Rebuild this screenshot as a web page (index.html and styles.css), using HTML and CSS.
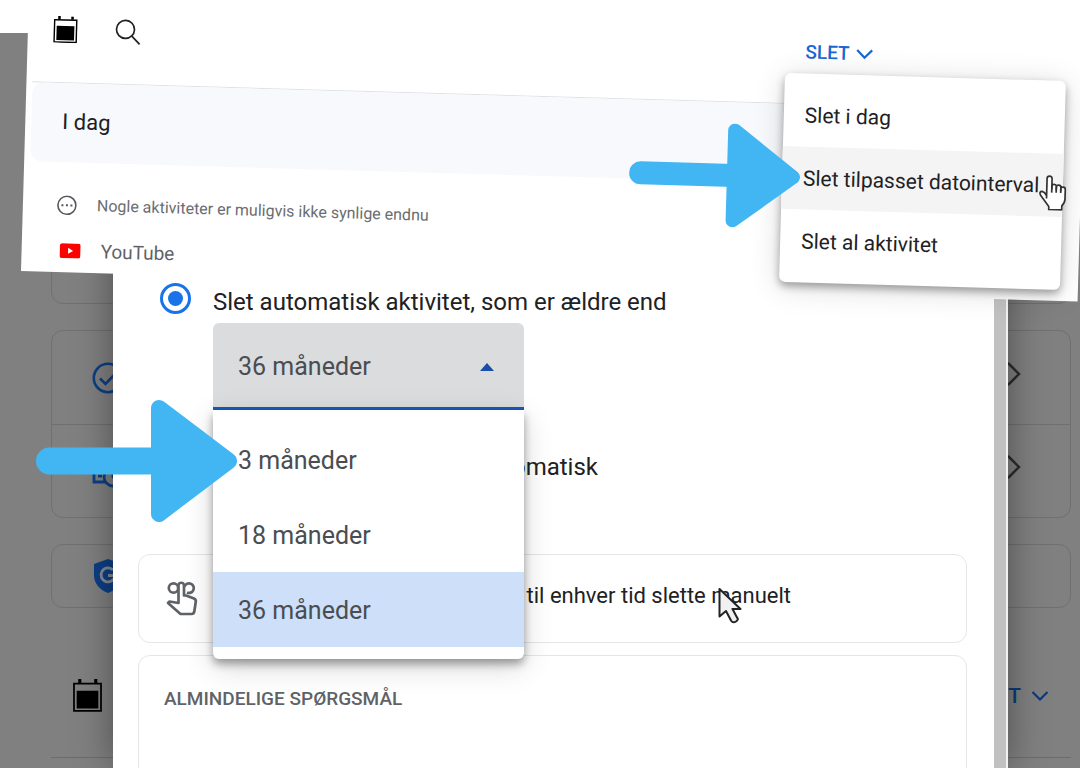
FILE: index.html
```html
<!DOCTYPE html>
<html lang="da">
<head>
<meta charset="utf-8">
<title>Slet aktivitet</title>
<link rel="stylesheet" href="styles.css">
</head>
<body>
<svg class="defs" aria-hidden="true">
  <symbol id="arrow" viewBox="0 0 201 122">
    <path d="M13.500 61H123" stroke="#41b6f3" stroke-width="27" stroke-linecap="round"/>
    <path d="M123 8 193 61 123 114Z" fill="#41b6f3" stroke="#41b6f3" stroke-width="16" stroke-linejoin="round"/>
  </symbol>
  <symbol id="calendar" viewBox="0 0 28 32">
    <path d="M.9 4.500H27.100V30.900H.9Z" fill="none" stroke="currentColor" stroke-width="1.700"/>
    <path d="M3.500 11.500H24.500V28.500H3.500ZM5 0H8V4H5ZM20.500 0H23.500V4H20.500Z"/>
  </symbol>
  <symbol id="down" viewBox="0 0 18 12">
    <path d="M1.500 2 9 9.500 16.500 2" fill="none" stroke="currentColor" stroke-width="2.200"/>
  </symbol>
  <symbol id="next" viewBox="0 0 16 26">
    <path d="M2 2 13 13 2 24" fill="none" stroke="currentColor" stroke-width="2.500"/>
  </symbol>
</svg>
<div class="stage">
  <main class="page">
    <section class="box box-first"></section>
    <section class="box">
      <div class="row">
        <svg class="icon32" viewBox="0 0 32 32" fill="none" stroke="#0c3f86" stroke-width="2.600"><circle cx="16" cy="16" r="14.200"/><path d="M8 16.500 13.500 22 24 11"/></svg>
        <svg class="next"><use href="#next"/></svg>
      </div>
      <div class="row">
        <svg class="icon32" viewBox="0 0 32 32" fill="none" stroke="#0c3f86" stroke-width="2.800"><path d="M13 27H2V9H24"/><circle cx="21" cy="22" r="9"/><path d="M6 21H10M21 16V22L24 25"/></svg>
        <svg class="next"><use href="#next"/></svg>
      </div>
    </section>
    <section class="box">
      <div class="row row-short">
        <svg class="icon32" viewBox="0 0 32 36"><path d="M16 1 30 6V17C30 26 24 32 16 35C8 32 2 26 2 17V6Z" fill="#0d3f86"/><path d="M21 12A7 7 0 1 0 23 17.500H16" fill="none" stroke="#848b94" stroke-width="2.800"/></svg>
      </div>
    </section>
    <div class="toolbar">
      <svg class="calendar"><use href="#calendar"/></svg>
      <button class="slet slet-dim" type="button">SLET <svg class="down"><use href="#down"/></svg></button>
    </div>
  </main>

  <section class="dialog">
    <div class="options">
      <div class="option"><input type="radio" name="auto" id="older" checked><label for="older">Slet automatisk aktivitet, som er ældre end</label></div>
      <div class="dropdown">
        <select class="field" aria-label="Alder"><option>36 måneder</option></select>
        <svg class="caret" viewBox="0 0 14 8"><path d="M0 8 7 0 14 8Z" fill="#174ea6"/></svg>
        <div class="list">
          <button type="button">3 måneder</button>
          <button type="button">18 måneder</button>
          <button type="button" class="chosen">36 måneder</button>
        </div>
      </div>
      <div class="option option-never"><input type="radio" name="auto" id="never"><label for="never">automatisk</label></div>
    </div>
    <div class="note">
      <svg class="tap" viewBox="0 0 32 36" fill="none" stroke="#5f6368" stroke-width="2.700" stroke-linejoin="round"><circle cx="7.500" cy="8" r="4.700"/><path d="M18.500 6.500A4.800 4.800 0 1 1 21 12.500"/><path d="M12.500 22V5A2.800 2.800 0 0 1 18 5V15.500H20L28 18.500A3 3 0 0 1 29.800 21.500L28.300 31.500A3 3 0 0 1 25.500 34H14.500L2 23 3.500 21.500 12.500 23Z" fill="#fff"/></svg>
      <p>til enhver tid slette manuelt</p>
    </div>
    <div class="faq"><h2>ALMINDELIGE SPØRGSMÅL</h2></div>
    <svg class="pointer" viewBox="0 0 24 36"><path d="M1.500 1.500V29L8 23.500 13 33Q15 36 18 34T19 30L14.500 21.500H22.500Z" fill="#f1f1f1" stroke="#222" stroke-width="2" stroke-linejoin="round"/></svg>
  </section>
  <svg class="arrow"><use href="#arrow"/></svg>

  <section class="sheet">
    <header class="head">
      <svg class="calendar calendar-small"><use href="#calendar"/></svg>
      <svg class="search" viewBox="0 0 26 26" fill="none" stroke="#222" stroke-width="1.700"><circle cx="10.500" cy="10.500" r="9"/><path d="M17 17 25 25"/></svg>
      <button class="slet" type="button">SLET <svg class="down"><use href="#down"/></svg></button>
    </header>
    <h1 class="day">I dag</h1>
    <div class="info">
      <svg class="more" viewBox="0 0 20 20"><circle cx="10" cy="10" r="9" fill="none" stroke="#55585c" stroke-width="1.600"/><path d="M4.500 9H6.500V11H4.500ZM9 9H11V11H9ZM13.500 9H15.500V11H13.500Z" fill="#55585c"/></svg>
      <p>Nogle aktiviteter er muligvis ikke synlige endnu</p>
    </div>
    <div class="source">
      <svg class="tube" viewBox="0 0 21 15"><rect width="21" height="15" rx="3" fill="#f00"/><path d="M8.500 4.500 13.500 7.500 8.500 10.500Z" fill="#fff"/></svg>
      <p>YouTube</p>
    </div>
    <div class="menu">
      <button type="button">Slet i dag</button>
      <button type="button" class="hover">Slet tilpasset datointerval</button>
      <button type="button">Slet al aktivitet</button>
      <svg class="hand" viewBox="0 0 28 36"><path d="M8 24V4A2.500 2.500 0 0 1 13 4V14V11.500A2.300 2.300 0 0 1 17.500 11.500V15V12.500A2.200 2.200 0 0 1 22 12.500V16V14.500A2.200 2.200 0 0 1 26.500 14.500V24Q26.500 28 23.500 31V35H10.500V32L2 21Q0 17 3.500 17 6 17.500 8 21" fill="#fff" stroke="#333" stroke-width="1.700" stroke-linejoin="round"/><path d="M13 11V18M17.500 12V18M22 14V18" stroke="#333" stroke-width="1.700"/></svg>
    </div>
    <svg class="arrow-small"><use href="#arrow"/></svg>
  </section>
</div>
</body>
</html>
```
FILE: styles.css
```css
* { box-sizing: border-box; }
body { margin: 0; font-family: Roboto, "Liberation Sans", sans-serif; color: #202124; }
h1, h2, p { margin: 0; font-weight: 400; }
button { font: inherit; color: inherit; border: 0; background: none; padding: 0; text-align: left; }
svg { flex: none; display: block; }
.defs { position: absolute; width: 0; height: 0; }
.stage { position: relative; min-height: 100vh; overflow: hidden; padding-top: 33px; background: linear-gradient(#fff 33px, #808080 33px); }

.page { padding: 0 9px 0 51px; }
.box { border: 1px solid #707070; border-radius: 12px; margin-bottom: 26px; }
.box-first { height: 271px; }
.row { display: flex; align-items: center; justify-content: space-between; height: 93px; padding: 0 48px 0 40px; }
.row + .row { border-top: 1px solid #707070; }
.row-short { height: 62px; }
.icon32 { width: 32px; height: 36px; }
.next { width: 16px; height: 26px; margin-bottom: 8px; color: #2c2d2f; }
.toolbar { display: flex; align-items: center; justify-content: space-between; height: 124px; padding: 0 22px; border-bottom: 1px solid #6c6c6c; }
.calendar { width: 29px; height: 33px; color: #000; }
.calendar-small { width: 25px; height: 27px; }
.slet { display: flex; align-items: center; gap: 6px; color: #1967d2; font-size: 19px; font-weight: 500; line-height: 24px; }
.slet-dim { gap: 10px; color: #0b3a7d; font-size: 21px; }
.down { width: 18px; height: 12px; }

.dialog { position: absolute; top: 0; bottom: 0; left: 113px; right: 72px; padding: 280px 39px 0 25px; background: #fff; border-right: 2px solid #f1f1f1; box-shadow: 0 0 36px rgba(0, 0, 0, .4); overflow: hidden; }
.dialog::after { content: ""; position: absolute; top: 0; bottom: 0; right: 0; width: 12px; background: #c1c1c1; }
.options { padding: 0 22px; height: 274px; }
.option { display: flex; align-items: center; gap: 22px; height: 43px; font-size: 24px; line-height: 28px; }
.option input { appearance: none; flex: none; width: 31px; height: 31px; margin: 0 0 6px; border: 3px solid #1a73e8; border-radius: 50%; padding: 5px; background: #1a73e8 content-box; }
.option #never { border-color: #5f6368; background: none; }
.option-never { margin-top: 35px; }
.option-never label { width: 385px; text-align: right; }
.dropdown { position: relative; z-index: 1; margin-left: 53px; width: 311px; color: #4a4d51; font-size: 25px; }
.field { display: block; appearance: none; width: 100%; height: 87px; margin: 0; padding: 3px 25px 0; border: 0; border-bottom: 3px solid #185abc; border-radius: 6px 6px 0 0; background: #dadcde; color: inherit; font: inherit; }
.caret { position: absolute; right: 30px; top: 40px; width: 14px; height: 8px; }
.list { position: absolute; top: 87px; left: 0; right: 0; padding: 12px 0; background: #fff; border-radius: 0 0 6px 6px; box-shadow: 0 5px 9px rgba(0, 0, 0, .35), 0 8px 30px rgba(0, 0, 0, .16); }
.list button { display: block; width: 100%; height: 75px; padding: 2px 25px 0; }
.list .chosen { background: #cee0f9; }
.note, .faq { border: 1px solid #e4e6e8; border-radius: 12px; }
.note { display: flex; align-items: center; justify-content: space-between; height: 89px; margin-bottom: 12px; padding: 0 175px 6px 27px; font-size: 22px; }
.tap { width: 32px; height: 36px; margin-top: 4px; }
.faq { padding: 30px 25px; height: 160px; }
.faq h2 { color: #5f6368; font-size: 19px; line-height: 26px; font-weight: 500; }
.pointer { position: absolute; left: 605px; top: 587px; width: 24px; height: 37px; }
.arrow { position: absolute; z-index: 2; left: 36px; top: 400px; width: 201px; height: 122px; }

.sheet { position: absolute; z-index: 2; left: 21px; right: 2px; top: -49px; height: 320px; padding-left: 6px; background: #fff; transform: rotate(1.65deg); transform-origin: 0 100%; }
.head { display: flex; align-items: flex-end; height: 131px; padding: 0 191px 39px 19px; margin-right: 20px; border-bottom: 1px solid #dfe1e5; }
.search { width: 26px; height: 26px; margin-left: 37px; }
.head .slet { margin-left: auto; }
.day { display: flex; align-items: center; height: 79px; margin-right: 20px; padding: 0 31px 2px; border-radius: 12px; background: #f8f9fc; font-size: 22px; }
.info, .source { display: flex; align-items: center; color: #6a6d71; }
.info { height: 85px; padding-left: 28px; gap: 20px; font-size: 16px; }
.more { width: 20px; height: 20px; }
.source { padding-left: 32px; gap: 20px; height: 7px; font-size: 19px; color: #5f6368; }
.tube { width: 21px; height: 15px; }
.menu { position: absolute; right: 18px; top: 100px; width: 281px; padding: 10px 0; border-radius: 6px; background: #fff; font-size: 21px; box-shadow: 0 4px 8px rgba(0, 0, 0, .35), 0 4px 32px rgba(0, 0, 0, .14); }
.menu button { display: block; width: 100%; height: 63px; padding: 0 21px; white-space: nowrap; }
.menu .hover { background: #f4f4f4; }
.hand { position: absolute; right: -4px; top: 94px; width: 28px; height: 36px; }
.arrow-small { position: absolute; left: 605px; top: 152px; width: 171px; height: 104px; }
```
